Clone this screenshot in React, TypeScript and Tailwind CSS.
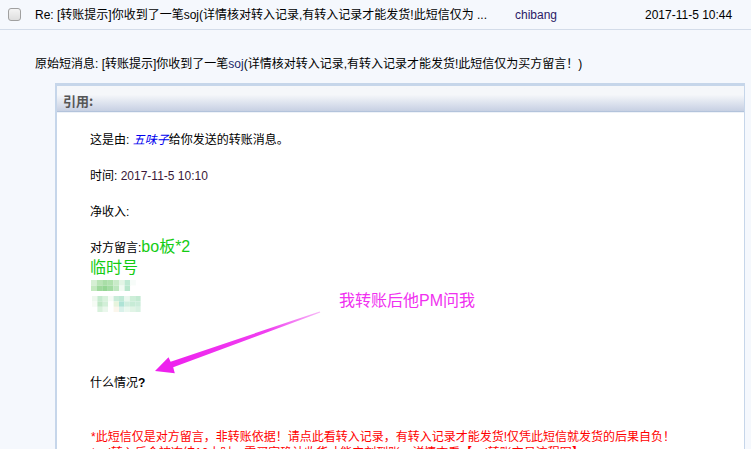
import React from "react";

const mosaic1 = [
  ["#d6efd4", "#b9e4b6", "#a9dea7", "#b0e2ae", "#c9ebc9", "#e4f5e6", "#bfe9d3", "#f7fcf9"],
  ["#c4e9c0", "#9fd99d", "#94d694", "#a3dca3", "#bde7bf", "#f1faf2", "#b8e6cc", "#ffffff"],
];
const mosaic2 = [
  ["#eef8ee", "#c6ebd0", "#d9f2dd", "#f5fbf5", "#c9ecd9", "#bfe9d6", "#e9f7ee", "#cdeed8", "#c3ead2"],
  ["#f6fbf5", "#bfe6c6", "#d2efd8", "#ffffff", "#e7f4dd", "#aee3d6", "#d0eedf", "#c7ebd6", "#cbecda"],
  ["#ffffff", "#d8f1dc", "#eaf7ec", "#ffffff", "#fbf6ec", "#d9f1ea", "#eaf8ef", "#e1f4e6", "#d8f1e2"],
];

function Mosaic({ cells, size, className }: { cells: string[][]; size: number; className: string }) {
  const w = cells[0].length * size;
  const h = cells.length * size;
  return (
    <svg width={w} height={h} className={className}>
      {cells.map((row, r) =>
        row.map((c, i) => <rect key={r + "-" + i} x={i * size} y={r * size} width={size} height={size} fill={c} />)
      )}
    </svg>
  );
}

export default function App() {
  return (
    <div className="relative w-[751px] h-[449px] overflow-hidden bg-[#f5f8fd] text-[12px] text-black font-['Liberation_Sans','Noto_Sans_CJK_SC',sans-serif]">
      {/* top row */}
      <div className="flex items-center h-[30px] border-b border-[#d3dce9]">
        <div className="ml-[8px] w-[13px] h-[13px] rounded-[3px] border border-[#a0a0a0] bg-gradient-to-b from-[#f4f4f4] to-[#dedede]" />
        <div className="ml-[14px] w-[480px] leading-[16px] whitespace-nowrap">
          Re: [转账提示]你收到了一笔soj(详情核对转入记录,有转入记录才能发货!此短信仅为 ...
        </div>
        <div className="w-[130px] leading-[16px] text-[#2b1a66]">chibang</div>
        <div className="leading-[16px]">2017-11-5 10:44</div>
      </div>

      {/* body */}
      <div className="pl-[35px] pt-[26px]">
        <div className="leading-[16px] whitespace-nowrap">
          原始短消息: [转账提示]你收到了一笔<span className="text-[#1a2a6a]">soj</span>(详情核对转入记录,有转入记录才能发货!此短信仅为买方留言！)
        </div>

        <div className="mt-[11px] ml-[20px] w-[690px] h-[400px] border-t-[3px] border-l-2 border-r border-[#c6d6ea] bg-white">
          <div className="h-[26px] bg-gradient-to-b from-[#f5f7fa] from-35% to-[#c7d0e3] border-b border-[#b3c3db] pl-[6px] pt-[8px] leading-[14px] text-[13px] font-bold text-[#565656] font-['Noto_Sans_CJK_SC',sans-serif]">
            引用:
          </div>
          <div className="h-[1px] bg-[#eef2f8]" />
          <div className="relative pl-[33px] pt-[18px] leading-[18px]">
            <div>
              这是由: <span className="italic text-[#0000ee]">五味子</span>给你发送的转账消息。
            </div>
            <div className="mt-[18px]">
              时间: <span className="text-[#3a1838]">2017-11-5 10:10</span>
            </div>
            <div className="mt-[18px]">净收入:</div>
            <div className="mt-[16px] leading-[20px]">
              对方留言:<span className="text-[16px] text-[#14cc14]">bo板*2</span>
            </div>
            <div className="leading-[20px] text-[16px] text-[#14cc14]">临时号</div>
            <div className="h-[41px]">
              <Mosaic cells={mosaic1} size={5.6} className="block mt-[2px] ml-[1px]" />
              <Mosaic cells={mosaic2} size={5.4} className="block mt-[5px] ml-[2px]" />
            </div>
            <div className="mt-[53px]">
              什么情况<span className="font-bold">?</span>
            </div>
            <div className="mt-[37px] pl-[1px] text-[#ff0000] whitespace-nowrap leading-[16px]">
              *此短信仅是对方留言，非转账依据！请点此看转入记录，有转入记录才能发货!仅凭此短信就发货的后果自负！
            </div>
            <div className="pl-[1px] text-[#ff0000] whitespace-nowrap leading-[16px]">
              *soj转入后会被冻结12小时，需买家确认收货才能立刻到账，详情查看【soj转账交易流程图】
            </div>
          </div>
        </div>
      </div>

      {/* annotation overlay */}
      <div className="absolute left-[339px] top-[291px] text-[16px] leading-[20px] text-[#f030f0] whitespace-nowrap">
        我转账后他PM问我
      </div>
      <svg className="absolute left-0 top-0 pointer-events-none" width="751" height="449">
        <defs>
          <linearGradient id="ag" x1="320" y1="312" x2="172" y2="365" gradientUnits="userSpaceOnUse">
            <stop offset="0" stopColor="#f7b8f7" />
            <stop offset="0.35" stopColor="#f040f0" />
            <stop offset="1" stopColor="#ee22ee" />
          </linearGradient>
        </defs>
        <polygon
          points="320.3,312.6 319.7,311.4 170.6,361.8 168.5,357.2 155,371 174.8,373.2 173.2,367.2"
          fill="url(#ag)"
        />
      </svg>
    </div>
  );
}
